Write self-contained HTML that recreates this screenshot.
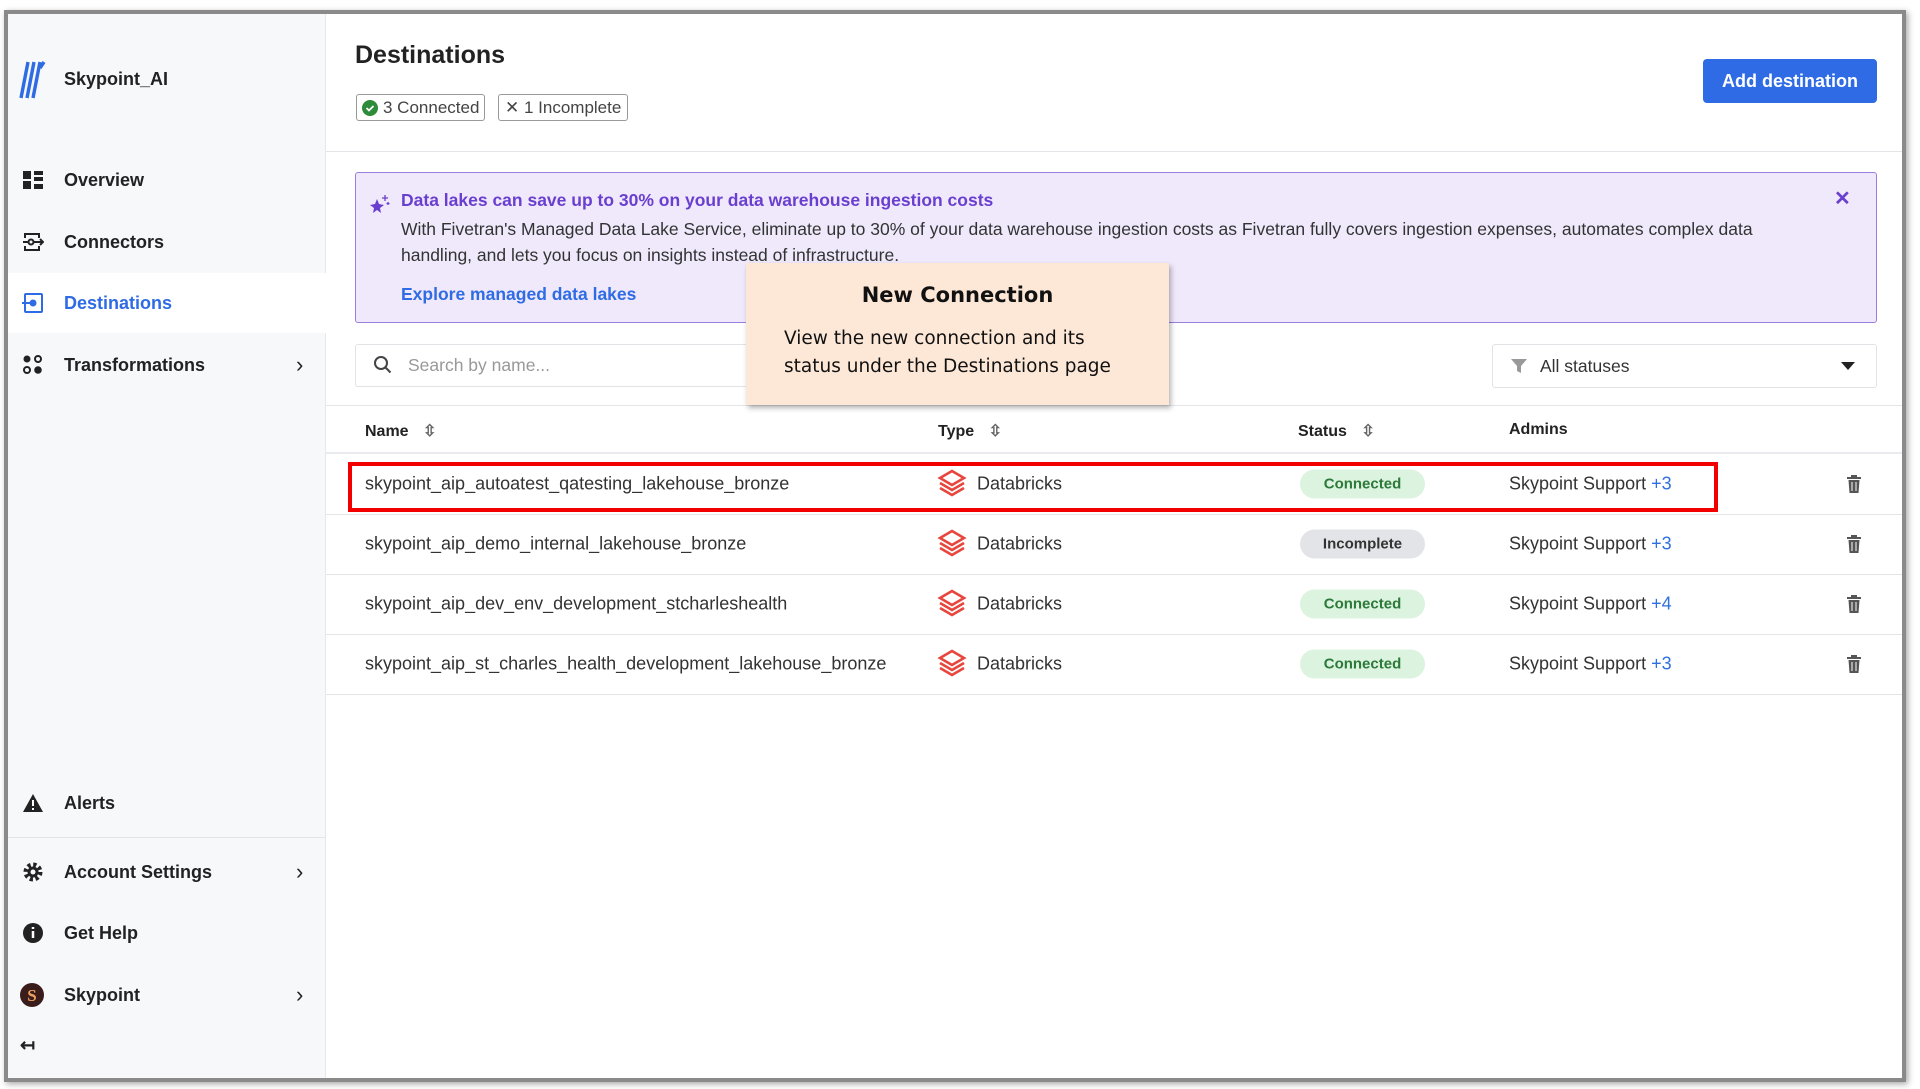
<!DOCTYPE html>
<html><head><meta charset="utf-8"><style>
*{box-sizing:border-box;margin:0;padding:0}
body{width:1920px;height:1089px;background:#fff;font-family:"Liberation Sans",sans-serif;color:#222;position:relative;overflow:hidden}
.frame{position:absolute;left:4px;top:10px;width:1902px;height:1072px;border:4px solid #8a8a8a;box-shadow:2px 2px 6px rgba(0,0,0,.35);background:#fff;overflow:hidden}
.in{position:absolute;left:-4px;top:-3px;width:1900px;height:1080px}
.a{position:absolute}
.side{position:absolute;left:0;top:0;width:322px;height:100%;background:#f7f8fa;border-right:1px solid #e6e8eb}
.nav{position:absolute;left:0;width:322px;height:58px;display:flex;align-items:center;font-size:18px;font-weight:bold;color:#222}
.nav .ic{position:absolute;left:18px;top:50%;transform:translateY(-50%);width:22px;height:22px}
.nav span{position:absolute;left:60px}
.nav .chev{position:absolute;left:292px;font-weight:normal;font-size:22px}
.row{position:absolute;left:322px;right:0;height:61px;border-bottom:1px solid #e3e5e8;font-size:18px;color:#333}
.row>*{position:absolute;top:50%;transform:translateY(-50%)}
.pill{width:125px;height:29px;border-radius:15px;text-align:center;line-height:29px;font-size:15px;font-weight:bold}
.ok{background:#dcf3df;color:#2c7a3a}
.inc{background:#e3e4e8;color:#333}
.plus{color:#2f6fe0}
</style></head><body>
<div class="frame"><div class="in">
<div class="side">
 <svg class="a" style="left:14px;top:47px" width="30" height="42" viewBox="0 0 30 42"><g stroke="#2f6be4" stroke-width="3.4" fill="none"><path d="M3 40 L10 4"/><path d="M9 40 L16 4"/><path d="M15 40 L22 4"/><path d="M22 10 L26 4"/></g></svg>
 <div class="a" style="left:60px;top:58px;font-size:18px;font-weight:bold">Skypoint_AI</div>
 <div class="nav" style="top:140px"><svg class="ic" viewBox="0 0 22 22"><rect x="1" y="2" width="8" height="8" fill="#222"/><rect x="12" y="2" width="9" height="4" fill="#222"/><rect x="12" y="8" width="9" height="4" fill="#222"/><rect x="1" y="12" width="8" height="8" fill="#222"/><rect x="12" y="15" width="9" height="5" fill="#222"/></svg><span>Overview</span></div>
 <div class="nav" style="top:202px"><svg class="ic" viewBox="0 0 22 22" fill="none" stroke="#222" stroke-width="2"><path d="M3 7V3h14v4M3 15v4h14v-4"/><circle cx="9" cy="11" r="2.5"/><path d="M1 11h5M12 11h9M18 8l3 3-3 3"/></svg><span>Connectors</span></div>
 <div class="nav" style="top:262px;height:60px;background:#fff;border-left:3px solid #2f6be4;color:#2f6be4"><svg class="ic" style="left:15px" viewBox="0 0 22 22" fill="none" stroke="#2f6be4" stroke-width="2"><rect x="3" y="2" width="17" height="18" rx="1"/><circle cx="11" cy="11" r="2.5" fill="#2f6be4"/><path d="M0 11h8"/></svg><span style="left:57px">Destinations</span></div>
 <div class="nav" style="top:325px"><svg class="ic" viewBox="0 0 22 22"><circle cx="5" cy="5" r="3.5" fill="#222"/><circle cx="16" cy="5" r="3" fill="none" stroke="#222" stroke-width="2"/><circle cx="5" cy="16" r="3" fill="none" stroke="#222" stroke-width="2"/><circle cx="16" cy="16" r="3.8" fill="#222"/></svg><span>Transformations</span><span class="chev">›</span></div>
 <div class="nav" style="top:763px"><svg class="ic" viewBox="0 0 22 22"><path d="M11 2L21 20H1Z" fill="#222"/><path d="M11 8v6M11 16v2" stroke="#fff" stroke-width="2"/></svg><span>Alerts</span></div>
 <div class="a" style="left:0;top:826px;width:322px;border-top:1px solid #e3e5e8"></div>
 <div class="nav" style="top:832px"><svg class="ic" viewBox="0 0 22 22"><circle cx="11" cy="11" r="7" fill="none" stroke="#222" stroke-width="5" stroke-dasharray="3 2.5"/><circle cx="11" cy="11" r="5.5" fill="#222"/><circle cx="11" cy="11" r="2.5" fill="#f7f8fa"/></svg><span>Account Settings</span><span class="chev">›</span></div>
 <div class="nav" style="top:893px"><svg class="ic" viewBox="0 0 22 22"><circle cx="11" cy="11" r="10" fill="#222"/><path d="M11 9v7M11 5v2" stroke="#fff" stroke-width="2.5"/></svg><span>Get Help</span></div>
 <div class="nav" style="top:955px"><svg class="ic" style="width:26px;height:26px;left:15px" viewBox="0 0 26 26"><circle cx="13" cy="13" r="12" fill="#3a1d1a"/><text x="13" y="19" text-anchor="middle" font-size="17" font-weight="bold" fill="#f0a060" font-family="Liberation Serif">S</text></svg><span>Skypoint</span><span class="chev">›</span></div>
 <div class="a" style="left:16px;top:1024px;font-size:18px;font-weight:bold">↤</div>
</div>

<div class="a" style="left:351px;top:30px;font-size:25px;font-weight:bold">Destinations</div>
<div class="a" style="left:352px;top:83px;height:27px;border:1px solid #999;border-radius:3px;font-size:17px;color:#444;padding:0 5px;line-height:25px;display:flex;align-items:center;gap:5px"><svg width="16" height="16"><circle cx="8" cy="8" r="8" fill="#2e8b3a"/><path d="M4.5 8l2.5 2.5 4.5-4.5" stroke="#fff" stroke-width="1.8" fill="none"/></svg>3 Connected</div>
<div class="a" style="left:494px;top:83px;height:27px;border:1px solid #999;border-radius:3px;font-size:17px;color:#444;padding:0 6px;line-height:25px">✕ 1 Incomplete</div>
<div class="a" style="left:1699px;top:48px;width:174px;height:44px;background:#2f6be4;border-radius:4px;color:#fff;font-weight:bold;font-size:18px;text-align:center;line-height:44px">Add destination</div>
<div class="a" style="left:322px;right:0;top:140px;border-top:1px solid #e3e5e8"></div>

<div class="a" style="left:351px;top:161px;width:1522px;height:151px;background:#efe9fb;border:1.5px solid #9b7fdc;border-radius:3px"></div>
<svg class="a" style="left:365px;top:182px" width="22" height="22" viewBox="0 0 22 22"><path d="M8 6l2 5 5 1-4 3 1 5-4-3-4 3 1-5-4-3 5-1z" fill="#6a3fd0"/><path d="M16 2v6M13 5h6M19 9v3M17.5 10.5h3" stroke="#6a3fd0" stroke-width="1.3"/></svg>
<div class="a" style="left:397px;top:179px;font-size:17.5px;font-weight:bold;color:#6a3fd0">Data lakes can save up to 30% on your data warehouse ingestion costs</div>
<div class="a" style="left:397px;top:205px;width:1400px;font-size:17.5px;line-height:26px;color:#333">With Fivetran's Managed Data Lake Service, eliminate up to 30% of your data warehouse ingestion costs as Fivetran fully covers ingestion expenses, automates complex data handling, and lets you focus on insights instead of infrastructure.</div>
<div class="a" style="left:397px;top:273px;font-size:17.5px;font-weight:bold;color:#2f6be4">Explore managed data lakes</div>
<div class="a" style="left:1830px;top:175px;font-size:20px;font-weight:bold;color:#6a3fd0">✕</div>

<div class="a" style="left:351px;top:333px;width:440px;height:43px;border:1px solid #e1e3e6;border-radius:3px"></div>
<svg class="a" style="left:369px;top:344px" width="20" height="20"><circle cx="8" cy="8" r="6" fill="none" stroke="#444" stroke-width="2"/><path d="M12.5 12.5l5 5" stroke="#444" stroke-width="2"/></svg>
<div class="a" style="left:404px;top:344px;font-size:17.5px;color:#999">Search by name...</div>
<div class="a" style="left:1488px;top:333px;width:385px;height:44px;border:1px solid #e1e3e6;border-radius:3px"></div>
<svg class="a" style="left:1506px;top:347px" width="18" height="16"><path d="M1 1h16l-6 7v7l-4-2V8z" fill="#999"/></svg>
<div class="a" style="left:1536px;top:345px;font-size:17.5px;color:#333">All statuses</div>
<svg class="a" style="left:1837px;top:351px" width="14" height="9"><path d="M0 0h14L7 8z" fill="#222"/></svg>

<div class="a" style="left:322px;right:0;top:394px;border-top:1px solid #e3e5e8"></div>
<div class="a" style="left:361px;top:410px;font-size:16px;font-weight:bold">Name <span style="color:#666;margin-left:10px">⇳</span></div>
<div class="a" style="left:934px;top:410px;font-size:16px;font-weight:bold">Type <span style="color:#666;margin-left:10px">⇳</span></div>
<div class="a" style="left:1294px;top:410px;font-size:16px;font-weight:bold">Status <span style="color:#666;margin-left:10px">⇳</span></div>
<div class="a" style="left:1505px;top:410px;font-size:16px;font-weight:bold">Admins</div>
<div class="a" style="left:322px;right:0;top:441px;border-top:2px solid #e9ebee"></div>

<svg width="0" height="0" style="position:absolute"><defs><symbol id="db" viewBox="0 0 30 30"><g fill="none" stroke="#e8453c" stroke-width="2.6"><path d="M3 9l12-7 12 7-12 7z"/><path d="M3 14l12 7 12-7"/><path d="M3 19l12 7 12-7"/></g></symbol><symbol id="tr" viewBox="0 0 14 18"><rect x="0" y="2" width="14" height="2" fill="#555"/><rect x="4" y="0" width="6" height="2" fill="#555"/><path d="M1.5 5h11l-1 13h-9z" fill="#555"/><path d="M5 7v9M9 7v9" stroke="#fff" stroke-width="1"/></symbol></defs></svg>

<div class="row" style="top:443px"><span style="left:39px">skypoint_aip_autoatest_qatesting_lakehouse_bronze</span><svg style="left:611px" width="30" height="30"><use href="#db"/></svg><span style="left:651px">Databricks</span><div class="pill ok" style="left:974px">Connected</div><span style="left:1183px">Skypoint Support <span class="plus">+3</span></span><svg style="left:1521px" width="14" height="18"><use href="#tr"/></svg></div>
<div class="row" style="top:503px"><span style="left:39px">skypoint_aip_demo_internal_lakehouse_bronze</span><svg style="left:611px" width="30" height="30"><use href="#db"/></svg><span style="left:651px">Databricks</span><div class="pill inc" style="left:974px">Incomplete</div><span style="left:1183px">Skypoint Support <span class="plus">+3</span></span><svg style="left:1521px" width="14" height="18"><use href="#tr"/></svg></div>
<div class="row" style="top:563px"><span style="left:39px">skypoint_aip_dev_env_development_stcharleshealth</span><svg style="left:611px" width="30" height="30"><use href="#db"/></svg><span style="left:651px">Databricks</span><div class="pill ok" style="left:974px">Connected</div><span style="left:1183px">Skypoint Support <span class="plus">+4</span></span><svg style="left:1521px" width="14" height="18"><use href="#tr"/></svg></div>
<div class="row" style="top:623px"><span style="left:39px">skypoint_aip_st_charles_health_development_lakehouse_bronze</span><svg style="left:611px" width="30" height="30"><use href="#db"/></svg><span style="left:651px">Databricks</span><div class="pill ok" style="left:974px">Connected</div><span style="left:1183px">Skypoint Support <span class="plus">+3</span></span><svg style="left:1521px" width="14" height="18"><use href="#tr"/></svg></div>

<div class="a" style="left:344px;top:451px;width:1370px;height:50px;border:4px solid #f20000"></div>

<div class="a" style="left:742px;top:252px;width:423px;height:142px;background:#fde8d8;box-shadow:2px 3px 5px rgba(0,0,0,.3);font-family:'DejaVu Sans','Liberation Sans',sans-serif">
 <div style="text-align:center;margin-top:20px;font-size:21px;font-weight:bold;color:#111">New Connection</div>
 <div style="margin:18px 0 0 38px;font-size:18.5px;line-height:28px;color:#111">View the new connection and its<br>status under the Destinations page</div>
</div>
</div></div>
</body></html>
